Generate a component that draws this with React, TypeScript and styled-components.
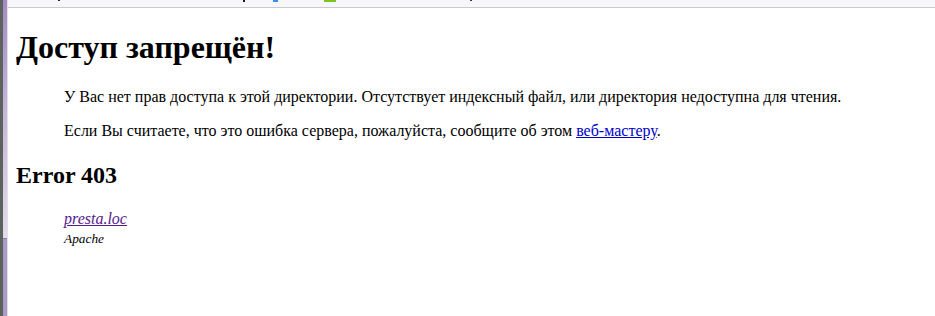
import styled, { createGlobalStyle } from 'styled-components';

const GlobalStyle = createGlobalStyle`
  html, body {
    margin: 0;
    padding: 0;
    background: #ffffff;
  }
  body {
    font-family: "Liberation Serif", "Times New Roman", serif;
    font-size: 16px;
    color: #000000;
  }
`;

const Window = styled.div`
  display: flex;
  height: 100vh;
  overflow: hidden;
`;

const FrameEdge = styled.div`
  width: 4px;
  display: flex;
  flex-direction: column;
  border-left: 3px solid #5e625e;
  border-right: 1px solid #e4e0ea;
`;

const FrameTop = styled.div`
  flex: 0 0 238px;
  background: linear-gradient(#a28bc3, #c3b6d8 45%, #e2dcea);
  border-bottom: 1px solid #8d80a8;
`;

const FrameBottom = styled.div`
  flex: 1;
  background: #a99dc6;
`;

const Main = styled.div`
  flex: 1;
  display: flex;
  flex-direction: column;
`;

const Toolbar = styled.div`
  height: 7px;
  flex: 0 0 auto;
  display: flex;
  align-items: flex-start;
  background: #f7f7f9;
  border-bottom: 1px solid #cacaca;
`;

const IconStub = styled.span<{ $at: number; $w: number; $h: number; $color: string }>`
  margin-left: ${(p) => p.$at}px;
  width: ${(p) => p.$w}px;
  height: ${(p) => p.$h}px;
  background: ${(p) => p.$color};
  flex: 0 0 auto;
`;

const Page = styled.div`
  flex: 1;
  display: flow-root;
  padding: 0 8px;
`;

const Title = styled.h1`
  font-size: 32px;
  font-weight: bold;
  margin: 21px 0 22px;
`;

const Para = styled.p`
  margin: 16px 0 16px 48px;
`;

const Code = styled.h2`
  font-size: 24px;
  font-weight: bold;
  margin: 22px 0 20px;
`;

const Address = styled.address`
  margin-left: 48px;
  font-style: italic;
  line-height: 19px;
`;

const Link = styled.a<{ $visited?: boolean }>`
  color: ${(p) => (p.$visited ? '#551a8b' : '#0000cc')};
  text-decoration: underline;
`;

const Small = styled.span`
  font-size: smaller;
`;

const App = () => {
  return (
    <>
      <GlobalStyle />
      <Window>
        <FrameEdge>
          <FrameTop />
          <FrameBottom />
        </FrameEdge>
        <Main>
          <Toolbar>
            <IconStub $at={50} $w={2} $h={1} $color="#222" />
            <IconStub $at={183} $w={2} $h={2} $color="#1b1b1b" />
            <IconStub $at={28} $w={5} $h={2} $color="#3b8ef0" />
            <IconStub $at={46} $w={12} $h={2} $color="#7cc520" />
            <IconStub $at={134} $w={2} $h={1} $color="#3a2a6a" />
          </Toolbar>
          <Page>
            <Title>Доступ запрещён!</Title>
            <Para>
              У Вас нет прав доступа к этой директории. Отсутствует индексный файл, или
              директория недоступна для чтения.
            </Para>
            <Para>
              Если Вы считаете, что это ошибка сервера, пожалуйста, сообщите об этом{' '}
              <Link href="#">веб-мастеру</Link>.
            </Para>
            <Code>Error 403</Code>
            <Address>
              <Link href="#" $visited>
                presta.loc
              </Link>
              <br />
              <Small>Apache</Small>
            </Address>
          </Page>
        </Main>
      </Window>
    </>
  );
};

export default App;
